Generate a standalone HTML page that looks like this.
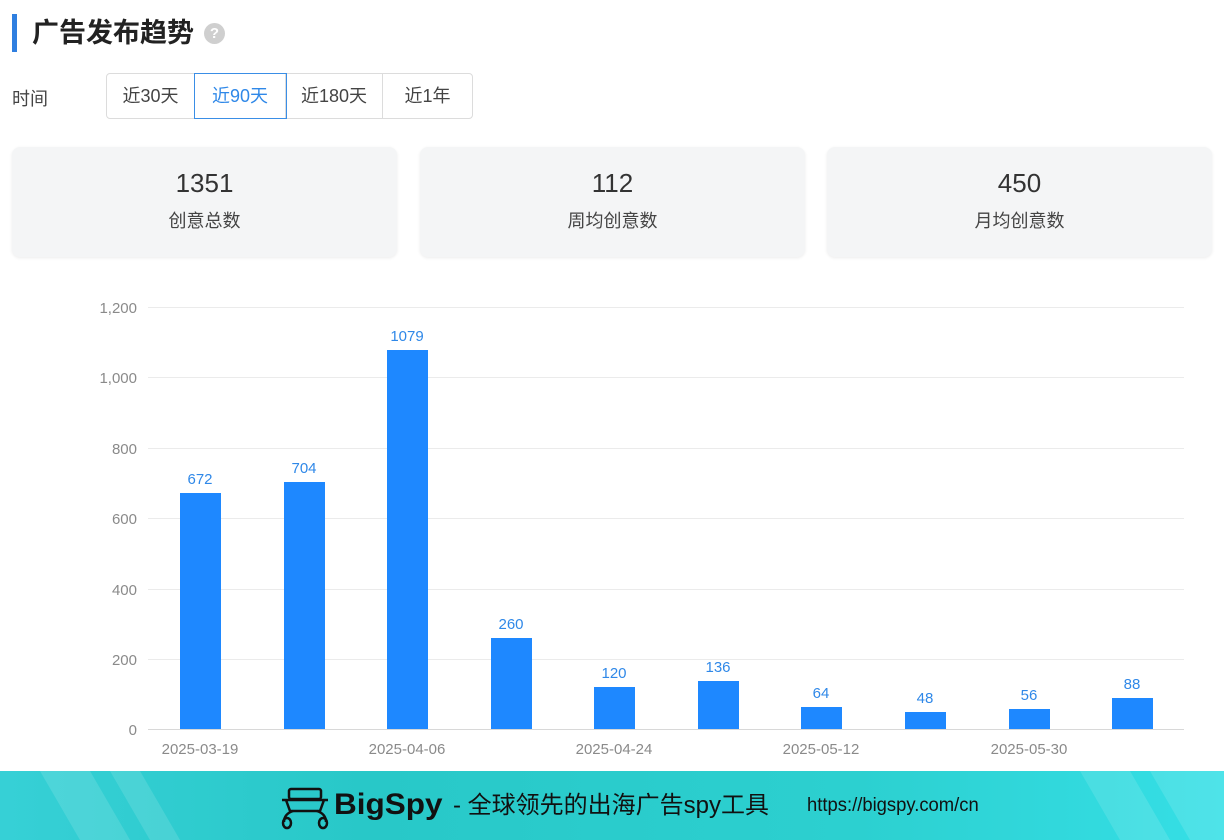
<!DOCTYPE html>
<html><head><meta charset="utf-8"><style>
*{margin:0;padding:0;box-sizing:border-box}
body{width:1224px;height:840px;background:#fff;font-family:"Liberation Sans","Noto Sans CJK SC",sans-serif;position:relative;overflow:hidden;color:#333}
.bar{position:absolute;left:12px;top:14px;width:5px;height:38px;background:#2f7fe0}
.title{position:absolute;left:32px;top:14px;font-size:27px;font-weight:bold;color:#222;line-height:38px}
.q{position:absolute;left:204px;top:23px;width:21px;height:21px;border-radius:50%;background:#cfcfcf;color:#fff;font-size:15px;font-weight:bold;text-align:center;line-height:21px}
.lbl{position:absolute;left:12px;top:85px;font-size:18px;color:#444}
.seg{position:absolute;left:106px;top:73px;height:46px;display:flex;border:1px solid #dcdcdc;border-radius:4px}
.seg div{height:44px;line-height:44px;font-size:18px;color:#444;text-align:center;border-right:1px solid #dcdcdc}
.seg div:last-child{border-right:none}
.seg .on{color:#2f88e8;outline:1px solid #3a8ee6;position:relative}
.card{position:absolute;top:147px;width:385px;height:110px;background:#f4f5f6;border-radius:8px;text-align:center;box-shadow:0 1px 3px rgba(0,0,0,.08)}
.card .n{font-size:26px;color:#333;margin-top:20px;line-height:32px}
.card .t{font-size:18px;color:#444;margin-top:8px}
.foot{position:absolute;left:0;top:771px;width:1224px;height:69px;background:linear-gradient(90deg,#36d0d6 0%,#28c8c8 30%,#2cd0d0 70%,#35dfe6 100%);overflow:hidden}
</style></head><body>
<div class="bar"></div>
<div class="title">广告发布趋势</div>
<div class="q">?</div>
<div class="lbl">时间</div>
<div class="seg"><div style="width:88px">近30天</div><div class="on" style="width:91px">近90天</div><div style="width:97px">近180天</div><div style="width:89px">近1年</div></div>
<div class="card" style="left:12px"><div class="n">1351</div><div class="t">创意总数</div></div>
<div class="card" style="left:420px"><div class="n">112</div><div class="t">周均创意数</div></div>
<div class="card" style="left:827px"><div class="n">450</div><div class="t">月均创意数</div></div>
<svg style="position:absolute;left:0;top:0" width="1224" height="771" font-family="Liberation Sans, sans-serif">
<g stroke="#ebebeb" stroke-width="1">
<line x1="148" x2="1184" y1="307.5" y2="307.5"/><line x1="148" x2="1184" y1="377.5" y2="377.5"/><line x1="148" x2="1184" y1="448.5" y2="448.5"/><line x1="148" x2="1184" y1="518.5" y2="518.5"/><line x1="148" x2="1184" y1="589.5" y2="589.5"/><line x1="148" x2="1184" y1="659.5" y2="659.5"/></g>
<line x1="148" x2="1184" y1="729.5" y2="729.5" stroke="#d8d8d8"/>
<g fill="#8a8a8a" font-size="15" text-anchor="end">
<text x="137" y="313">1,200</text><text x="137" y="383">1,000</text><text x="137" y="454">800</text><text x="137" y="524">600</text><text x="137" y="595">400</text><text x="137" y="665">200</text><text x="137" y="735">0</text></g>
<g fill="#1e88ff">
<rect x="180" y="493" width="41" height="236"/><rect x="284" y="482" width="41" height="247"/><rect x="387" y="350" width="41" height="379"/><rect x="491" y="638" width="41" height="91"/><rect x="594" y="687" width="41" height="42"/><rect x="698" y="681" width="41" height="48"/><rect x="801" y="707" width="41" height="22"/><rect x="905" y="712" width="41" height="17"/><rect x="1009" y="709" width="41" height="20"/><rect x="1112" y="698" width="41" height="31"/></g>
<g fill="#2f88e8" font-size="15" text-anchor="middle">
<text x="200" y="484">672</text><text x="304" y="473">704</text><text x="407" y="341">1079</text><text x="511" y="629">260</text><text x="614" y="678">120</text><text x="718" y="672">136</text><text x="821" y="698">64</text><text x="925" y="703">48</text><text x="1029" y="700">56</text><text x="1132" y="689">88</text></g>
<g fill="#8a8a8a" font-size="15" text-anchor="middle">
<text x="200" y="754">2025-03-19</text><text x="407" y="754">2025-04-06</text><text x="614" y="754">2025-04-24</text><text x="821" y="754">2025-05-12</text><text x="1029" y="754">2025-05-30</text></g>
</svg>
<div class="foot">
<svg width="1224" height="69" style="position:absolute;left:0;top:0">
<g fill="#ffffff" opacity="0.12"><polygon points="40,0 90,0 130,69 80,69"/><polygon points="110,0 140,0 180,69 150,69"/><polygon points="1080,0 1130,0 1170,69 1120,69"/><polygon points="1150,0 1224,0 1224,69 1190,69"/></g>
<g fill="none" stroke="#111" stroke-width="2.5">
<rect x="289" y="18" width="32" height="10" rx="2"/><path d="M282 29h46M286 29l4 11h30l4-11"/><path d="M293 40q-9 3-9 11M317 40q9 3 9 11"/><ellipse cx="287" cy="52" rx="4" ry="5"/><ellipse cx="323" cy="52" rx="4" ry="5"/>
</g>
<div style="position:absolute;left:334px;top:16px;font-size:30px;font-weight:bold;color:#111;line-height:36px;transform:scaleX(1.05);transform-origin:left">BigSpy</div>
<div style="position:absolute;left:453px;top:18px;font-size:24px;color:#111;line-height:34px;transform:scaleX(1.0);transform-origin:left">- 全球领先的出海广告spy工具</div>
<div style="position:absolute;left:807px;top:23px;font-size:19px;color:#111;line-height:24px;transform:scaleX(0.97);transform-origin:left">https://bigspy.com/cn</div>
</div>
</body></html>
